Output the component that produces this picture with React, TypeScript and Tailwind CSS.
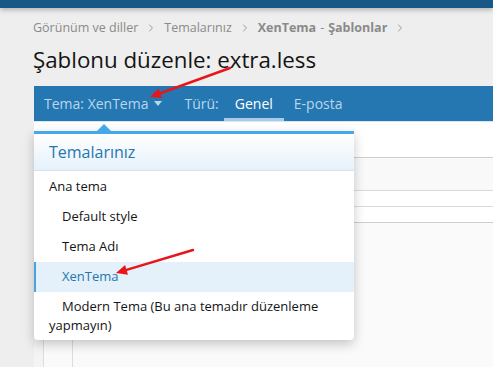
import { ChevronRight } from "lucide-react";

const items = [
  { label: "Default style" },
  { label: "Tema Adı" },
];

function Arrow({ x1, y1, x2, y2 }: { x1: number; y1: number; x2: number; y2: number }) {
  const a = Math.atan2(y2 - y1, x2 - x1);
  const len = 11;
  const w = 5;
  const bx = x2 - len * Math.cos(a);
  const by = y2 - len * Math.sin(a);
  const px = -Math.sin(a) * w;
  const py = Math.cos(a) * w;
  return (
    <g>
      <line x1={x1} y1={y1} x2={bx} y2={by} stroke="#e8151b" strokeWidth={2.5} strokeLinecap="round" />
      <polygon points={`${x2},${y2} ${bx + px},${by + py} ${bx - px},${by - py}`} fill="#e8151b" />
    </g>
  );
}

const App = () => {
  return (
    <div
      className="relative w-[493px] h-[367px] overflow-hidden bg-[#eeeeee] text-[#141414]"
      style={{ fontFamily: '"Open Sans", "Noto Sans", sans-serif' }}
    >
      <div className="h-[8px] bg-[#185886] shadow-[0_2px_5px_rgba(0,0,0,0.25)]" />

      <div className="pl-[33px]">
        <div className="flex items-center h-[22px] mt-[9px] text-[12.5px] text-[#8a8a8a]">
          <span>Görünüm ve diller</span>
          <ChevronRight className="w-3 h-3 mx-[7px] text-[#9a9a9a]" strokeWidth={2} />
          <span>Temalarınız</span>
          <ChevronRight className="w-3 h-3 mx-[7px] text-[#9a9a9a]" strokeWidth={2} />
          <span className="font-bold">XenTema</span>
          <span className="mx-1">-</span>
          <span className="font-bold">Şablonlar</span>
          <ChevronRight className="w-3 h-3 mx-[7px] text-[#9a9a9a]" strokeWidth={2} />
        </div>
        <h1 className="text-[22.3px] leading-[30px] mt-[6px] text-[#141414]">
          Şablonu düzenle: extra.less
        </h1>

        <div className="mt-[11px] ml-px flex items-stretch h-[36px] bg-[#2577b1] text-[14px] text-[#b9d6ee] border-b border-[#d6e6f3]">
          <div className="flex items-center pl-[10px] pr-[22px]">
            <span>Tema: XenTema</span>
            <span className="ml-[6px] w-0 h-0 border-x-[4px] border-x-transparent border-t-[5px] border-t-[#b9d6ee]" />
          </div>
          <div className="flex items-center pr-[5px]">Türü:</div>
          <div className="flex items-center px-[11px] text-white border-b-[3px] border-[#a9cbe8] pt-[3px]">
            Genel
          </div>
          <div className="flex items-center px-[10px]">E-posta</div>
        </div>

        <div className="ml-px bg-white h-[250px] flex flex-col">
          <div className="h-[36px] border-b border-[#cfcfcf]" />
          <div className="h-[33px] bg-[#f9f9f9] border-b border-[#dadada]" />
          <div className="h-[16px] border-b border-[#dadada]" />
          <div className="h-[16px] border-b border-[#cfcfcf]" />
          <div className="flex-1 flex bg-[#f9f9f9]">
            <div className="w-[10px] bg-[#f4f4f4] border-r border-[#dcdcdc]" />
            <div className="w-[29px] bg-[#fafafa] border-r border-[#dcdcdc]" />
            <div className="flex-1 bg-[#fafafa]" />
          </div>
        </div>
      </div>

      <div className="absolute left-[34px] top-[131px] w-[320px] bg-white rounded-b-[4px] shadow-[0_4px_12px_rgba(0,0,0,0.22)] border-t-[3px] border-[#47a7eb]">
        <div className="absolute -top-[10px] left-[62px] w-0 h-0 border-x-[8px] border-x-transparent border-b-[8px] border-b-[#47a7eb]" />
        <div className="h-[37px] flex items-center pl-[15px] text-[16px] text-[#2577b1] bg-gradient-to-b from-white to-[#e6f1fb] border-b border-[#d3e3f0]">
          Temalarınız
        </div>
        <div className="text-[13px] pb-[5px]">
          <div className="h-[30px] flex items-center pl-[15px] mt-[1px]">Ana tema</div>
          {items.map((it) => (
            <div key={it.label} className="h-[30px] flex items-center pl-[28px]">
              {it.label}
            </div>
          ))}
          <div className="h-[30px] flex items-center pl-[26px] bg-[#e4f0fa] text-[#2577b1] border-l-[2px] border-[#4da2df]">
            XenTema
          </div>
          <div className="pl-[15px] pr-[10px] pt-[5px] leading-[19px] indent-[13px]">
            Modern Tema (Bu ana temadır düzenleme yapmayın)
          </div>
        </div>
      </div>

      <svg className="absolute inset-0 pointer-events-none" width={493} height={367}>
        <Arrow x1={230} y1={68} x2={150} y2={97} />
        <Arrow x1={193} y1={250} x2={116} y2={273} />
      </svg>
    </div>
  );
};

export default App;
